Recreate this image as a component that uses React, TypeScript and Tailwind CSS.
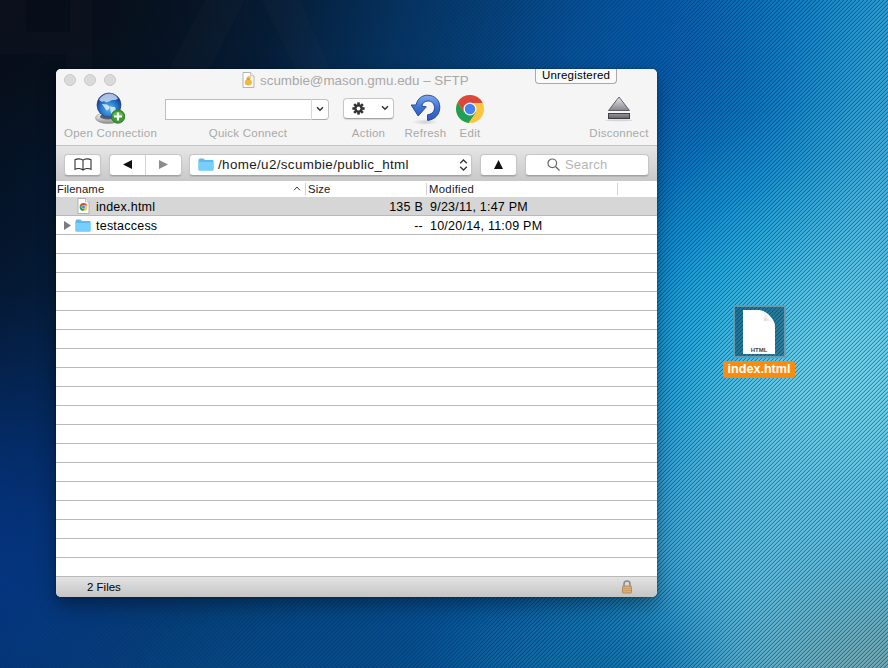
import type { ReactNode } from 'react';

const BUTTON =
  'flex items-center rounded border border-[#c6c6c6] border-b-[#a3a3a3] bg-white shadow-[0_1px_1px_rgba(0,0,0,0.12)]';

// x, y, rx, ry, colour, strength
const glows: [number, number, number, number, string, number][] = [
  [0, 580, 330, 370, '#05347f', 1],
  [330, 700, 480, 260, '#084c8a', 0.9],
  [40, 10, 360, 190, '#080c14', 0.85],
  [650, 110, 200, 230, '#0856a4', 0.5],
  [725, 310, 190, 250, '#00a0dc', 0.7],
  [850, 400, 270, 300, '#72d4ec', 1],
  [790, 560, 270, 230, '#62bcdc', 0.8],
  [580, 680, 200, 150, '#1270a6', 0.8],
  [890, 690, 230, 170, '#78a6aa', 0.9],
];

function Wallpaper() {
  return (
    <svg className="absolute inset-0" width="888" height="668" viewBox="0 0 888 668">
      <defs>
        <linearGradient id="base" x1="0" y1="0" x2="1" y2="0.22">
          <stop offset="0" stopColor="#040f20" />
          <stop offset="0.3" stopColor="#05213f" />
          <stop offset="0.55" stopColor="#07427c" />
          <stop offset="0.72" stopColor="#0a5ca8" />
          <stop offset="0.86" stopColor="#1080c2" />
          <stop offset="1" stopColor="#3ca8d8" />
        </linearGradient>
        {glows.map(([, , , , color, strength], i) => (
          <radialGradient key={i} id={`glow${i}`}>
            <stop offset="0" stopColor={color} stopOpacity={strength} />
            <stop offset="0.2" stopColor={color} stopOpacity={strength * 0.9} />
            <stop offset="0.4" stopColor={color} stopOpacity={strength * 0.65} />
            <stop offset="0.6" stopColor={color} stopOpacity={strength * 0.35} />
            <stop offset="0.8" stopColor={color} stopOpacity={strength * 0.1} />
            <stop offset="1" stopColor={color} stopOpacity="0" />
          </radialGradient>
        ))}
        <pattern id="twill" width="4" height="4" patternUnits="userSpaceOnUse" shapeRendering="crispEdges">
          <path d="M3 0h1v1h-1zM2 1h1v1h-1zM1 2h1v1h-1zM0 3h1v1h-1z" fill="#002a50" fillOpacity="0.46" />
          <path d="M2 0h1v1h-1zM1 1h1v1h-1zM0 2h1v1h-1zM3 3h1v1h-1z" fill="#002a50" fillOpacity="0.12" />
        </pattern>
        <linearGradient id="fade" x1="0" y1="0" x2="1" y2="0.3">
          <stop offset="0" stopColor="#444" />
          <stop offset="0.5" stopColor="#888" />
          <stop offset="0.8" stopColor="#fff" />
        </linearGradient>
        <mask id="twillMask">
          <rect width="888" height="668" fill="url(#fade)" />
        </mask>
      </defs>
      <rect width="888" height="668" fill="url(#base)" />
      {glows.map(([x, y, rx, ry], i) => (
        <ellipse key={i} cx={x} cy={y} rx={rx} ry={ry} fill={`url(#glow${i})`} />
      ))}
      <g fill="#8a7a78" fillOpacity="0.035">
        <path d="M0 0h26v32h44V0h22v92H66V54H0z" />
        <path d="M205 0h40l-48 92h-40zM262 0h38l40 92h-34z" />
      </g>
      <rect width="888" height="668" fill="url(#twill)" mask="url(#twillMask)" />
    </svg>
  );
}

function Globe() {
  return (
    <svg width="34" height="34" viewBox="0 0 34 34">
      <defs>
        <radialGradient id="ocean" cx="0.5" cy="0.65" r="0.6">
          <stop offset="0" stopColor="#5bb6f2" />
          <stop offset="0.6" stopColor="#2273c8" />
          <stop offset="1" stopColor="#1a3480" />
        </radialGradient>
        <linearGradient id="stand" x1="0" y1="0" x2="0" y2="1">
          <stop offset="0" stopColor="#fafafa" />
          <stop offset="0.6" stopColor="#c4c4c4" />
          <stop offset="1" stopColor="#8a8a8a" />
        </linearGradient>
      </defs>
      <ellipse cx="14" cy="26" rx="12.500" ry="5.500" fill="url(#stand)" stroke="#8b8b8b" strokeWidth="0.6" />
      <ellipse cx="14" cy="24.5" rx="8" ry="3" fill="#585f68" />
      <circle cx="15" cy="13" r="12" fill="url(#ocean)" stroke="#263d83" strokeWidth="0.7" />
      <path d="M5 8q3-6 10-6.500 6 0 9 5-2 2-6 1.500l-3 1.500-3 1-2-1.500-2 1z" fill="#cfe0f6" fillOpacity="0.8" />
      <path d="M8 12l5 .5 3 2.500-1.500 2.500-2 1-2-3zM16 14.500l5 .5 1 3-4 5.500-1.500-4z" fill="#e0effc" fillOpacity="0.85" />
      <circle cx="24" cy="24.500" r="6.700" fill="#3d9b32" stroke="#2a7426" strokeWidth="0.9" />
      <path d="M18.600 24a5.500 5 0 0 1 10.800 0z" fill="#7bc45e" fillOpacity="0.7" />
      <path d="M24 20.500v8M20 24.500h8" stroke="#fff" strokeWidth="2.200" />
    </svg>
  );
}

function Refresh() {
  return (
    <svg width="32" height="34" viewBox="0 0 32 34">
      <defs>
        <linearGradient id="arrow" x1="0" y1="0" x2="0" y2="1">
          <stop offset="0" stopColor="#7aaaf0" />
          <stop offset="0.5" stopColor="#3d72d4" />
          <stop offset="1" stopColor="#2b59be" />
        </linearGradient>
        <radialGradient id="ground">
          <stop offset="0" stopColor="#000" stopOpacity="0.16" />
          <stop offset="1" stopColor="#000" stopOpacity="0" />
        </radialGradient>
      </defs>
      <ellipse cx="15" cy="30" rx="13" ry="3" fill="url(#ground)" />
      <path
        d="M6 13C7.500 6.500 12 3.200 17.500 3.200c7.200 0 12.300 5 12.300 12 0 7.300-5 12.500-12.300 13.200v-5.600c4.500-.6 7-3.400 7-7.200 0-3.900-2.800-6.600-6.500-6.600-3.300 0-5.700 2-6.200 5.200l4.500.6-8.100 9.200L1.200 13z"
        fill="url(#arrow)"
        stroke="#203f8d"
        strokeWidth="0.9"
        strokeLinejoin="round"
      />
    </svg>
  );
}

function Chrome({ size }: { size: number }) {
  return (
    <svg width={size} height={size} viewBox="0 0 28 28">
      <circle cx="14" cy="14" r="14" fill="#fbc63f" />
      <path d="M1.880 7A14 14 0 0 0 12.500 27.920L19.800 17.500 14 14 7.900 17.500z" fill="#1ea05b" />
      <path d="M1.880 7A14 14 0 0 1 26.600 8H14L8 10.500 7.900 17.500z" fill="#d9483b" />
      <circle cx="14" cy="14" r="6.500" fill="#f4f4f4" />
      <circle cx="14" cy="14" r="5.200" fill="#4284f4" />
    </svg>
  );
}

function Gear() {
  return (
    <svg width="13" height="13" viewBox="-6.500 -6.500 13 13" fill="#333">
      {[0, 45, 90, 135].map((a) => (
        <rect key={a} x="-1.3" y="-6.1" width="2.6" height="12.2" transform={`rotate(${a})`} />
      ))}
      <circle r="4.2" />
      <circle r="1.9" fill="#fff" />
    </svg>
  );
}

function Chevron() {
  return (
    <svg width="8" height="6" viewBox="0 0 8 6" fill="none" stroke="#333" strokeWidth="1.5">
      <path d="M1 1.200l3 3 3-3" />
    </svg>
  );
}

function Eject() {
  return (
    <svg width="28" height="26" viewBox="0 0 28 26">
      <defs>
        <linearGradient id="metal" x1="0" y1="0" x2="0" y2="1">
          <stop offset="0" stopColor="#e8e8ea" />
          <stop offset="1" stopColor="#85858b" />
        </linearGradient>
        <linearGradient id="bar" x1="0" y1="0" x2="0" y2="1">
          <stop offset="0" stopColor="#99999f" />
          <stop offset="1" stopColor="#606067" />
        </linearGradient>
      </defs>
      <ellipse cx="14" cy="24.300" rx="13.500" ry="1" fill="#000" fillOpacity="0.13" />
      <path d="M14 1L3.500 14.500h21z" fill="url(#metal)" stroke="#55555a" strokeWidth="0.9" />
      <rect x="3.500" y="17.500" width="21" height="5" fill="url(#bar)" stroke="#3f3f45" />
    </svg>
  );
}

function Folder() {
  return (
    <svg width="16" height="13" viewBox="0 0 16 13">
      <path d="M.5 2Q.5.500 2 .500h3.500L7 2h7.500q1 0 1 1v8.500q0 1-1 1h-13q-1 0-1-1z" fill="#5fb9ea" />
      <path d="M.5 4h15v7.500q0 1-1 1h-13q-1 0-1-1z" fill="#75cffa" />
    </svg>
  );
}

function Page({ children }: { children: ReactNode }) {
  return (
    <svg width="13" height="16" viewBox="0 0 13 16">
      <path d="M1 .5h7.500l3.500 3.500v11.500H1z" fill="#fff" stroke="#a2a2a2" strokeWidth="0.8" />
      <path d="M8.500.5V4H12" fill="#eee" stroke="#b5b5b5" strokeWidth="0.7" />
      {children}
    </svg>
  );
}

function Tool({ label, className, children }: { label: string; className: string; children: ReactNode }) {
  return (
    <div className={`flex flex-col items-center ${className}`}>
      <div className="flex h-[35px] items-center justify-center">{children}</div>
      <span className="h-[14px] whitespace-nowrap text-[11.5px] leading-[14px] tracking-[0.24px] text-[#a9a9a9]">{label}</span>
    </div>
  );
}

type Entry = { name: string; size: string; modified: string; folder: boolean };

const entries: Entry[] = [
  { name: 'index.html', size: '135 B', modified: '9/23/11, 1:47 PM', folder: false },
  { name: 'testaccess', size: '--', modified: '10/20/14, 11:09 PM', folder: true },
];

function FileRow({ entry }: { entry: Entry }) {
  return (
    <div
      className={`flex h-[19px] items-center border-b border-[#b9b9b9] text-[12.5px] leading-[18px] tracking-[0.23px] text-black ${
        entry.folder ? 'bg-white' : 'bg-[#d6d6d6]'
      }`}
    >
      <div className="flex w-[250px] items-center pl-[7px]">
        <span className="flex w-[12px]">
          {entry.folder && (
            <svg width="9" height="9" viewBox="0 0 9 9">
              <path d="M1 0l7 4.500-7 4.500z" fill="#7c7c7c" />
            </svg>
          )}
        </span>
        <span className="mr-[5px] flex w-4 justify-center">
          {entry.folder ? (
            <Folder />
          ) : (
            <Page>
              <g transform="translate(2.500 5)">
                <Chrome size={8} />
              </g>
            </Page>
          )}
        </span>
        <span className="h-[18px] leading-[20px]">{entry.name}</span>
      </div>
      <span className="h-[18px] w-[117px] text-right leading-[20px]">{entry.size}</span>
      <span className="ml-[7px] h-[18px] leading-[20px]">{entry.modified}</span>
    </div>
  );
}

function AppWindow() {
  return (
    <div className="absolute left-[56px] top-[69px] flex h-[528px] w-[601px] flex-col overflow-hidden rounded-[5px] bg-white shadow-[0_8px_18px_rgba(0,0,0,0.35),0_0_2px_rgba(0,0,0,0.4)]">
      <div className="h-[77px] border-b border-[#c3c3c3] bg-[#f5f5f5]">
        <div className="flex h-[22px] items-center pl-2">
          <div className="flex gap-2">
            <i className="size-3 rounded-full border border-[#c9c9c9] bg-[#dadada]" />
            <i className="size-3 rounded-full border border-[#c9c9c9] bg-[#dadada]" />
            <i className="size-3 rounded-full border border-[#c9c9c9] bg-[#dadada]" />
          </div>
          <div className="ml-[126px] flex w-[293px] items-center gap-[5px]">
            <Page>
              <circle cx="6.800" cy="6" r="2.100" fill="#f3c04d" />
              <ellipse cx="6.300" cy="10.500" rx="3.600" ry="3" fill="#f2b63f" />
              <path d="M4.500 6.500h3v1.300h-3z" fill="#df8134" />
            </Page>
            <span className="h-[22px] whitespace-nowrap text-[13.4px] leading-[24px] text-[#a8a8a8]">
              scumbie@mason.gmu.edu – SFTP
            </span>
          </div>
          <div className="mb-[7px] flex h-[15px] w-[82px] items-center justify-center rounded-b-[4px] border border-t-0 border-[#a9a9a9] bg-[#fafafa] pb-px text-[11.5px] leading-[13px] tracking-[0.2px] text-black">
            Unregistered
          </div>
        </div>
        <div className="flex pl-2 pr-[8px]">
          <Tool label="Open Connection" className="w-[93px]">
            <Globe />
          </Tool>
          <Tool label="Quick Connect" className="ml-2 w-[166px]">
            <div className="mr-[2px] mt-px flex h-[21px] w-[164px] items-stretch">
              <div className="flex-1 border border-r-0 border-[#bdbdbd] bg-white" />
              <div className="flex w-[18px] items-center justify-center rounded-r-[4px] border border-[#c2c2c2] border-b-[#a9a9a9] border-l-[#d8d8d8] bg-white">
                <Chevron />
              </div>
            </div>
          </Tool>
          <Tool label="Action" className="ml-[12px] w-[51px]">
            <div className={`${BUTTON} mb-px h-[21px] w-[51px] justify-between pl-[8px] pr-[4px]`}>
              <Gear />
              <Chevron />
            </div>
          </Tool>
          <Tool label="Refresh" className="ml-[11px] w-[41px]">
            <Refresh />
          </Tool>
          <Tool label="Edit" className="ml-[10px] w-[28px]">
            <div className="mt-px">
              <Chrome size={28} />
            </div>
          </Tool>
          <Tool label="Disconnect" className="ml-auto w-[60px]">
            <div className="mt-px">
              <Eject />
            </div>
          </Tool>
        </div>
      </div>

      <div className="flex h-[35px] items-center bg-gradient-to-b from-[#e6e6e6] to-[#c9c9c9] pl-2 pt-[2px]">
        <div className={`${BUTTON} h-[22px] w-[37px] justify-center`}>
          <svg width="18" height="13" viewBox="0 0 18 13" fill="none" stroke="#333" strokeWidth="1.100">
            <path d="M9 2.200C7 .5 3 .5 1 1.800v9.500c2-1.300 6-1.200 8 .7 2-1.900 6-2 8-.7V1.800C15 .5 11 .5 9 2.200zM9 2.200V12" />
          </svg>
        </div>
        <div className={`${BUTTON} ml-2 h-[22px] w-[73px]`}>
          <span className="flex h-full flex-1 items-center justify-center border-r border-[#d4d4d4]">
            <svg width="9" height="9" viewBox="0 0 9 9">
              <path d="M9 0v9L0 4.500z" fill="#111" />
            </svg>
          </span>
          <span className="flex flex-1 justify-center">
            <svg width="9" height="9" viewBox="0 0 9 9">
              <path d="M0 0v9l9-4.500z" fill="#8c8c8c" />
            </svg>
          </span>
        </div>
        <div className={`${BUTTON} ml-[7px] h-[22px] w-[283px] pl-2 pr-[3px] text-[13.4px] leading-[20px] tracking-[0.36px] text-[#1a1a1a]`}>
          <Folder />
          <span className="ml-[4px] flex-1">/home/u2/scumbie/public_html</span>
          <svg width="9" height="12" viewBox="0 0 9 12" fill="none" stroke="#333" strokeWidth="1.300">
            <path d="M1.200 4.200L4.500 1l3.300 3.200M1.200 7.800L4.500 11l3.300-3.200" />
          </svg>
        </div>
        <div className={`${BUTTON} ml-2 h-[22px] w-[37px] justify-center`}>
          <svg width="9" height="9" viewBox="0 0 9 9">
            <path d="M4.500 0L9 9H0z" fill="#111" />
          </svg>
        </div>
        <div className={`${BUTTON} ml-2 h-[22px] w-[124px] gap-[5px] pl-[21px] text-[13px] leading-[20px] tracking-[0.2px] text-[#b5b5b5]`}>
          <svg width="13" height="13" viewBox="0 0 13 13" fill="none" stroke="#666" strokeWidth="1.200">
            <circle cx="5.300" cy="5.300" r="4.300" />
            <path d="M8.500 8.500l4 4" />
          </svg>
          Search
        </div>
      </div>

      <div className="flex h-[16px] items-center pb-px text-[11.3px] leading-[14px] tracking-[0.1px] text-[#1a1a1a]">
        <span className="w-[237px] pl-px">Filename</span>
        <svg width="8" height="5" viewBox="0 0 8 5" fill="none" stroke="#444">
          <path d="M1 4.300L4 1l3 3.300" />
        </svg>
        <span className="ml-[4px] h-[12px] w-px bg-[#d3d3d3]" />
        <span className="ml-[2px] w-[118px]">Size</span>
        <span className="h-[12px] w-px bg-[#d3d3d3]" />
        <span className="ml-[2px] w-[188px] tracking-[0.3px]">Modified</span>
        <span className="h-[12px] w-px bg-[#d3d3d3]" />
      </div>
      {entries.map((entry) => (
        <FileRow key={entry.name} entry={entry} />
      ))}
      {Array.from({ length: 18 }, (_, i) => (
        <div key={i} className="h-[19px] border-b border-[#b9b9b9]" />
      ))}
      <div className="flex h-[20px] items-center justify-between bg-gradient-to-b from-[#e3e3e3] to-[#c5c5c5] pl-[31px] pr-[24px] text-[11.5px] text-black">
        <span className="pt-px leading-[19px]">2 Files</span>
        <svg width="12" height="14" viewBox="0 0 12 14">
          <path d="M3 7V4a3 3 0 0 1 6 0v3" fill="none" stroke="#8a8a8a" strokeWidth="1.500" />
          <rect x="1.500" y="6" width="9" height="7" rx="0.800" fill="#dfae70" stroke="#a98257" strokeWidth="0.800" />
          <path d="M2 8.500h8M2 10.500h8" stroke="#c4935a" strokeWidth="0.700" />
        </svg>
      </div>
    </div>
  );
}

function DesktopFile() {
  return (
    <div className="absolute left-[723px] top-[305px] flex w-[72px] flex-col items-center">
      <div className="flex size-[53px] items-center justify-center rounded-[2px] border-2 border-[#9ab4bf]/60 bg-[#00354f]/50">
        <svg width="34" height="44" viewBox="0 0 34 44">
          <defs>
            <linearGradient id="curl" x1="0" y1="1" x2="1" y2="0">
              <stop offset="0.200" stopColor="#b4b4b4" />
              <stop offset="0.600" stopColor="#fff" />
            </linearGradient>
          </defs>
          <path d="M1 0h16C24 1 33 9 33 17v27H1z" fill="#fff" />
          <path d="M17 0c5 1 6 5 5 11 6-1 10 1 11 6C33 9 24 1 17 0z" fill="url(#curl)" />
          <text x="17" y="41.500" textAnchor="middle" fontSize="6" fontWeight="bold" fill="#444" fontFamily="Liberation Sans, Arial, sans-serif">
            HTML
          </text>
        </svg>
      </div>
      <span className="mt-[3px] h-[17px] w-[72px] rounded-[3px] bg-[#fb8b0b] text-center text-[12.6px] font-bold leading-[17px] text-white">
        index.html
      </span>
    </div>
  );
}

export default function App() {
  return (
    <main className="relative h-[668px] w-[888px] overflow-hidden bg-[#07427c] font-['Liberation_Sans',Arial,sans-serif]">
      <Wallpaper />
      <AppWindow />
      <DesktopFile />
    </main>
  );
}
